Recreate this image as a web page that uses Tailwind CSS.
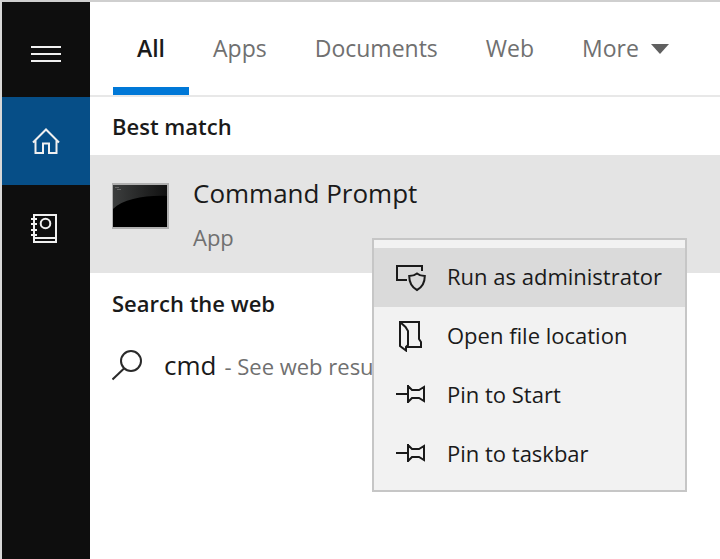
<!DOCTYPE html>
<html lang="en">
<head>
    <meta charset="UTF-8">
    <meta name="viewport" content="width=device-width, initial-scale=1.0">
    <title>Search</title>
    <script src="https://cdn.jsdelivr.net/npm/@tailwindcss/browser@4"></script>
</head>
<body class="bg-white font-['Open_Sans',sans-serif] text-[#1a1a1a] overflow-hidden">
    <div class="flex min-h-screen border-t-2 border-t-[#cfcfcf] border-l-2 border-l-[#d8d8d8]">
        <!-- Sidebar -->
        <nav class="flex w-22 shrink-0 flex-col bg-[#0e0e0e] text-[#f0f0f0]" aria-label="Sidebar">
            <button type="button" class="flex h-[95px] items-center justify-center pt-2" aria-label="Menu">
                <svg class="h-5 w-8" viewBox="0 0 32 20" fill="none" stroke="currentColor" stroke-width="2">
                    <path d="M1 3h30M1 10h30M1 17h30"/>
                </svg>
            </button>
            <button type="button" class="flex h-22 items-center justify-center bg-[#064e87]" aria-label="Home">
                <svg class="h-8 w-8" viewBox="0 0 32 32" fill="none" stroke="currentColor" stroke-width="2">
                    <path d="M3 17.500 16 4.500l13 13M5.500 15.500V28h7.500v-9.500h6V28h7.500V15.500"/>
                </svg>
            </button>
            <button type="button" class="flex h-22 items-center justify-center" aria-label="Notebook">
                <svg class="h-8 w-8" viewBox="0 0 32 32" fill="none" stroke="currentColor" stroke-width="2">
                    <path d="M4 2h22v27H4zM4 25h22"/>
                    <circle cx="15.500" cy="10.500" r="4.800"/>
                    <path d="M1 6h6M1 11h6M1 17h6M1 22h6"/>
                </svg>
            </button>
        </nav>

        <main class="relative min-w-0 flex-1">
            <!-- Filter tabs -->
            <div class="flex h-[95px] border-b-2 border-[#e8e8e8] pl-[23px] text-[23px] text-[#707070]">
                <button type="button" class="border-b-8 border-[#0078d7] px-6 pt-2 font-semibold text-[#1a1a1a]">All</button>
                <button type="button" class="border-b-8 border-transparent px-6 pt-2">Apps</button>
                <button type="button" class="border-b-8 border-transparent px-6 pt-2">Documents</button>
                <button type="button" class="border-b-8 border-transparent px-6 pt-2">Web</button>
                <button type="button" class="flex items-center gap-3 border-b-8 border-transparent px-6 pt-2">
                    More
                    <svg class="h-[10px] w-[18px]" viewBox="0 0 18 10" fill="#606060"><path d="M0 0h18L9 10z"/></svg>
                </button>
            </div>

            <h2 class="flex h-[58px] items-center pl-[22px] text-[22px] font-semibold">Best match</h2>
            <a href="#" class="flex h-[118px] gap-6 bg-[#e4e4e4] pt-5 pl-[22px]">
                <svg class="mt-2 h-[46px] w-[57px]" viewBox="0 0 57 46">
                    <defs>
                        <linearGradient id="gloss" x1="0" y1="0" x2="1" y2="0">
                            <stop offset="0" stop-color="#3c3e3e"/>
                            <stop offset="1" stop-color="#111"/>
                        </linearGradient>
                    </defs>
                    <path fill="#b0b0b0" d="M0 0h57v46H0z"/>
                    <path fill="#000" d="M1 2h54v42H1z"/>
                    <path fill="url(#gloss)" d="M1 2h54v11C34 12 11 16 1 26z"/>
                    <path stroke="#666" d="M3 4.500h4M5 6.500h4"/>
                </svg>
                <span class="flex flex-col">
                    <span class="text-[26px] leading-9">Command Prompt</span>
                    <span class="mt-2 text-[22px] leading-9 text-[#707070]">App</span>
                </span>
            </a>

            <h2 class="flex h-[60px] items-center pl-[22px] text-[22px] font-semibold">Search the web</h2>
            <a href="#" class="flex h-16 items-center gap-5 pl-[22px]">
                <svg class="h-8 w-8 shrink-0" viewBox="0 0 32 32" fill="none" stroke="#2a2a2a" stroke-width="2">
                    <circle cx="19" cy="12" r="10"/>
                    <path d="M12 19.500.500 30.500"/>
                </svg>
                <span class="flex items-baseline gap-2 whitespace-nowrap">
                    <span class="text-[26px]">cmd</span>
                    <span class="text-[22px] text-[#707070]">- See web results</span>
                </span>
            </a>

            <!-- Context menu -->
            <div class="absolute top-[236px] left-[282px] w-[315px] border-2 border-[#c6c6c6] bg-[#f2f2f2] pt-2 pb-1.5 text-[22px]" role="menu">
                <button type="button" role="menuitem" class="flex h-[59px] w-full items-center gap-5 bg-[#dadada] pb-0.5 pl-[21px] whitespace-nowrap">
                    <svg class="h-8 w-8 shrink-0" viewBox="0 0 32 32" fill="none" stroke="currentColor" stroke-width="2">
                        <path d="M12 19H2V5h25v5"/>
                        <path d="M22 12.500c2 1.700 4.300 2.500 7.800 2.500 0 7-2.300 11-7.800 14-5.500-3-7.800-7-7.800-14 3.500 0 5.800-.8 7.800-2.500z"/>
                    </svg>
                    Run as administrator
                </button>
                <button type="button" role="menuitem" class="flex h-[59px] w-full items-center gap-5 pb-0.5 pl-[21px] whitespace-nowrap">
                    <svg class="h-8 w-8 shrink-0" viewBox="0 0 32 32" fill="none" stroke="currentColor" stroke-width="2">
                        <path d="M11 27H26v-5l-2-3V2H5v24l6 4.500V27l2-2V11L10.500 7 5 2"/>
                    </svg>
                    Open file location
                </button>
                <button type="button" role="menuitem" class="flex h-[59px] w-full items-center gap-5 pb-0.5 pl-[21px] whitespace-nowrap">
                    <svg class="h-8 w-8 shrink-0" viewBox="0 0 32 32" fill="none" stroke="currentColor" stroke-width="2">
                        <path d="M1 15h12M13 6v18M13 7l4 4h7l5-3v14l-5-3h-7l-4 4"/>
                    </svg>
                    Pin to Start
                </button>
                <button type="button" role="menuitem" class="flex h-[59px] w-full items-center gap-5 pb-0.5 pl-[21px] whitespace-nowrap">
                    <svg class="h-8 w-8 shrink-0" viewBox="0 0 32 32" fill="none" stroke="currentColor" stroke-width="2">
                        <path d="M1 15h12M13 6v18M13 7l4 4h7l5-3v14l-5-3h-7l-4 4"/>
                    </svg>
                    Pin to taskbar
                </button>
            </div>
        </main>
    </div>
</body>
</html>
